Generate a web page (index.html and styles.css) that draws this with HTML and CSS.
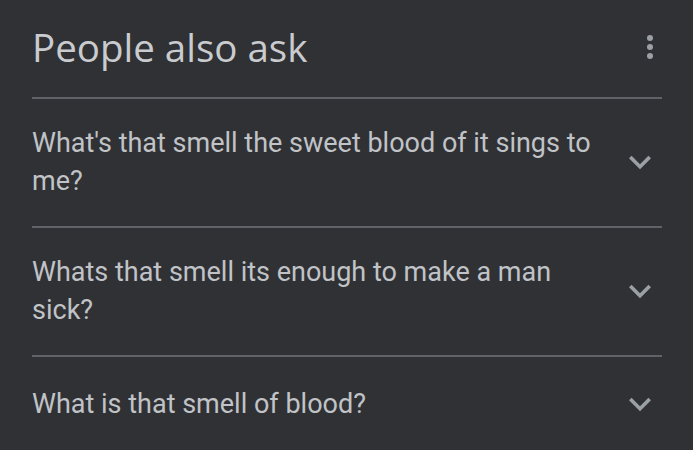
FILE: index.html
```html
<!DOCTYPE html>
<html lang="en">
<head>
<meta charset="utf-8">
<title>People also ask</title>
<link rel="stylesheet" href="styles.css">
</head>
<body>
<div class="paa">
  <div class="paa-header">
    <h2 class="paa-title">People also ask</h2>
    <svg class="more" viewBox="0 0 24 24" width="36" height="36" aria-hidden="true">
      <circle cx="12" cy="6" r="2"/>
      <circle cx="12" cy="12" r="2"/>
      <circle cx="12" cy="18" r="2"/>
    </svg>
  </div>
  <div class="q">
    <span class="q-text">What's that smell the sweet blood of it sings to me?</span>
    <svg class="chev" viewBox="0 0 24 24" width="44" height="44" aria-hidden="true"><path d="M16.59 8.59L12 13.17 7.41 8.59 6 10l6 6 6-6z"/></svg>
  </div>
  <div class="q">
    <span class="q-text">Whats that smell its enough to make a man sick?</span>
    <svg class="chev" viewBox="0 0 24 24" width="44" height="44" aria-hidden="true"><path d="M16.59 8.59L12 13.17 7.41 8.59 6 10l6 6 6-6z"/></svg>
  </div>
  <div class="q">
    <span class="q-text">What is that smell of blood?</span>
    <svg class="chev" viewBox="0 0 24 24" width="44" height="44" aria-hidden="true"><path d="M16.59 8.59L12 13.17 7.41 8.59 6 10l6 6 6-6z"/></svg>
  </div>
</div>
</body>
</html>
```
FILE: styles.css
```css
html, body {
  margin: 0;
  background: #303134;
  height: 100%;
}
.paa {
  padding: 0 31px 0 32px;
  font-family: Roboto, "Liberation Sans", sans-serif;
  color: #c0c3c7;
}
.paa-header {
  display: flex;
  align-items: center;
  justify-content: space-between;
  height: 97px;
  border-bottom: 2px solid #5f6368;
}
.paa-title {
  margin: 0;
  font-family: "Open Sans", sans-serif;
  font-weight: 500;
  font-size: 38.5px;
  color: #c9cbcf;
  padding-bottom: 4px;
}
.more {
  fill: #9aa0a6;
  margin-right: -6px;
  margin-bottom: 4px;
}
.q {
  display: flex;
  align-items: center;
  justify-content: space-between;
  gap: 20px;
  padding: 25px 0 26px;
  border-bottom: 2px solid #5f6368;
}
.q:last-child {
  border-bottom: none;
}
.q-text {
  font-size: 27px;
  line-height: 38px;
}
.chev {
  flex: none;
  fill: #9aa0a6;
}
```
